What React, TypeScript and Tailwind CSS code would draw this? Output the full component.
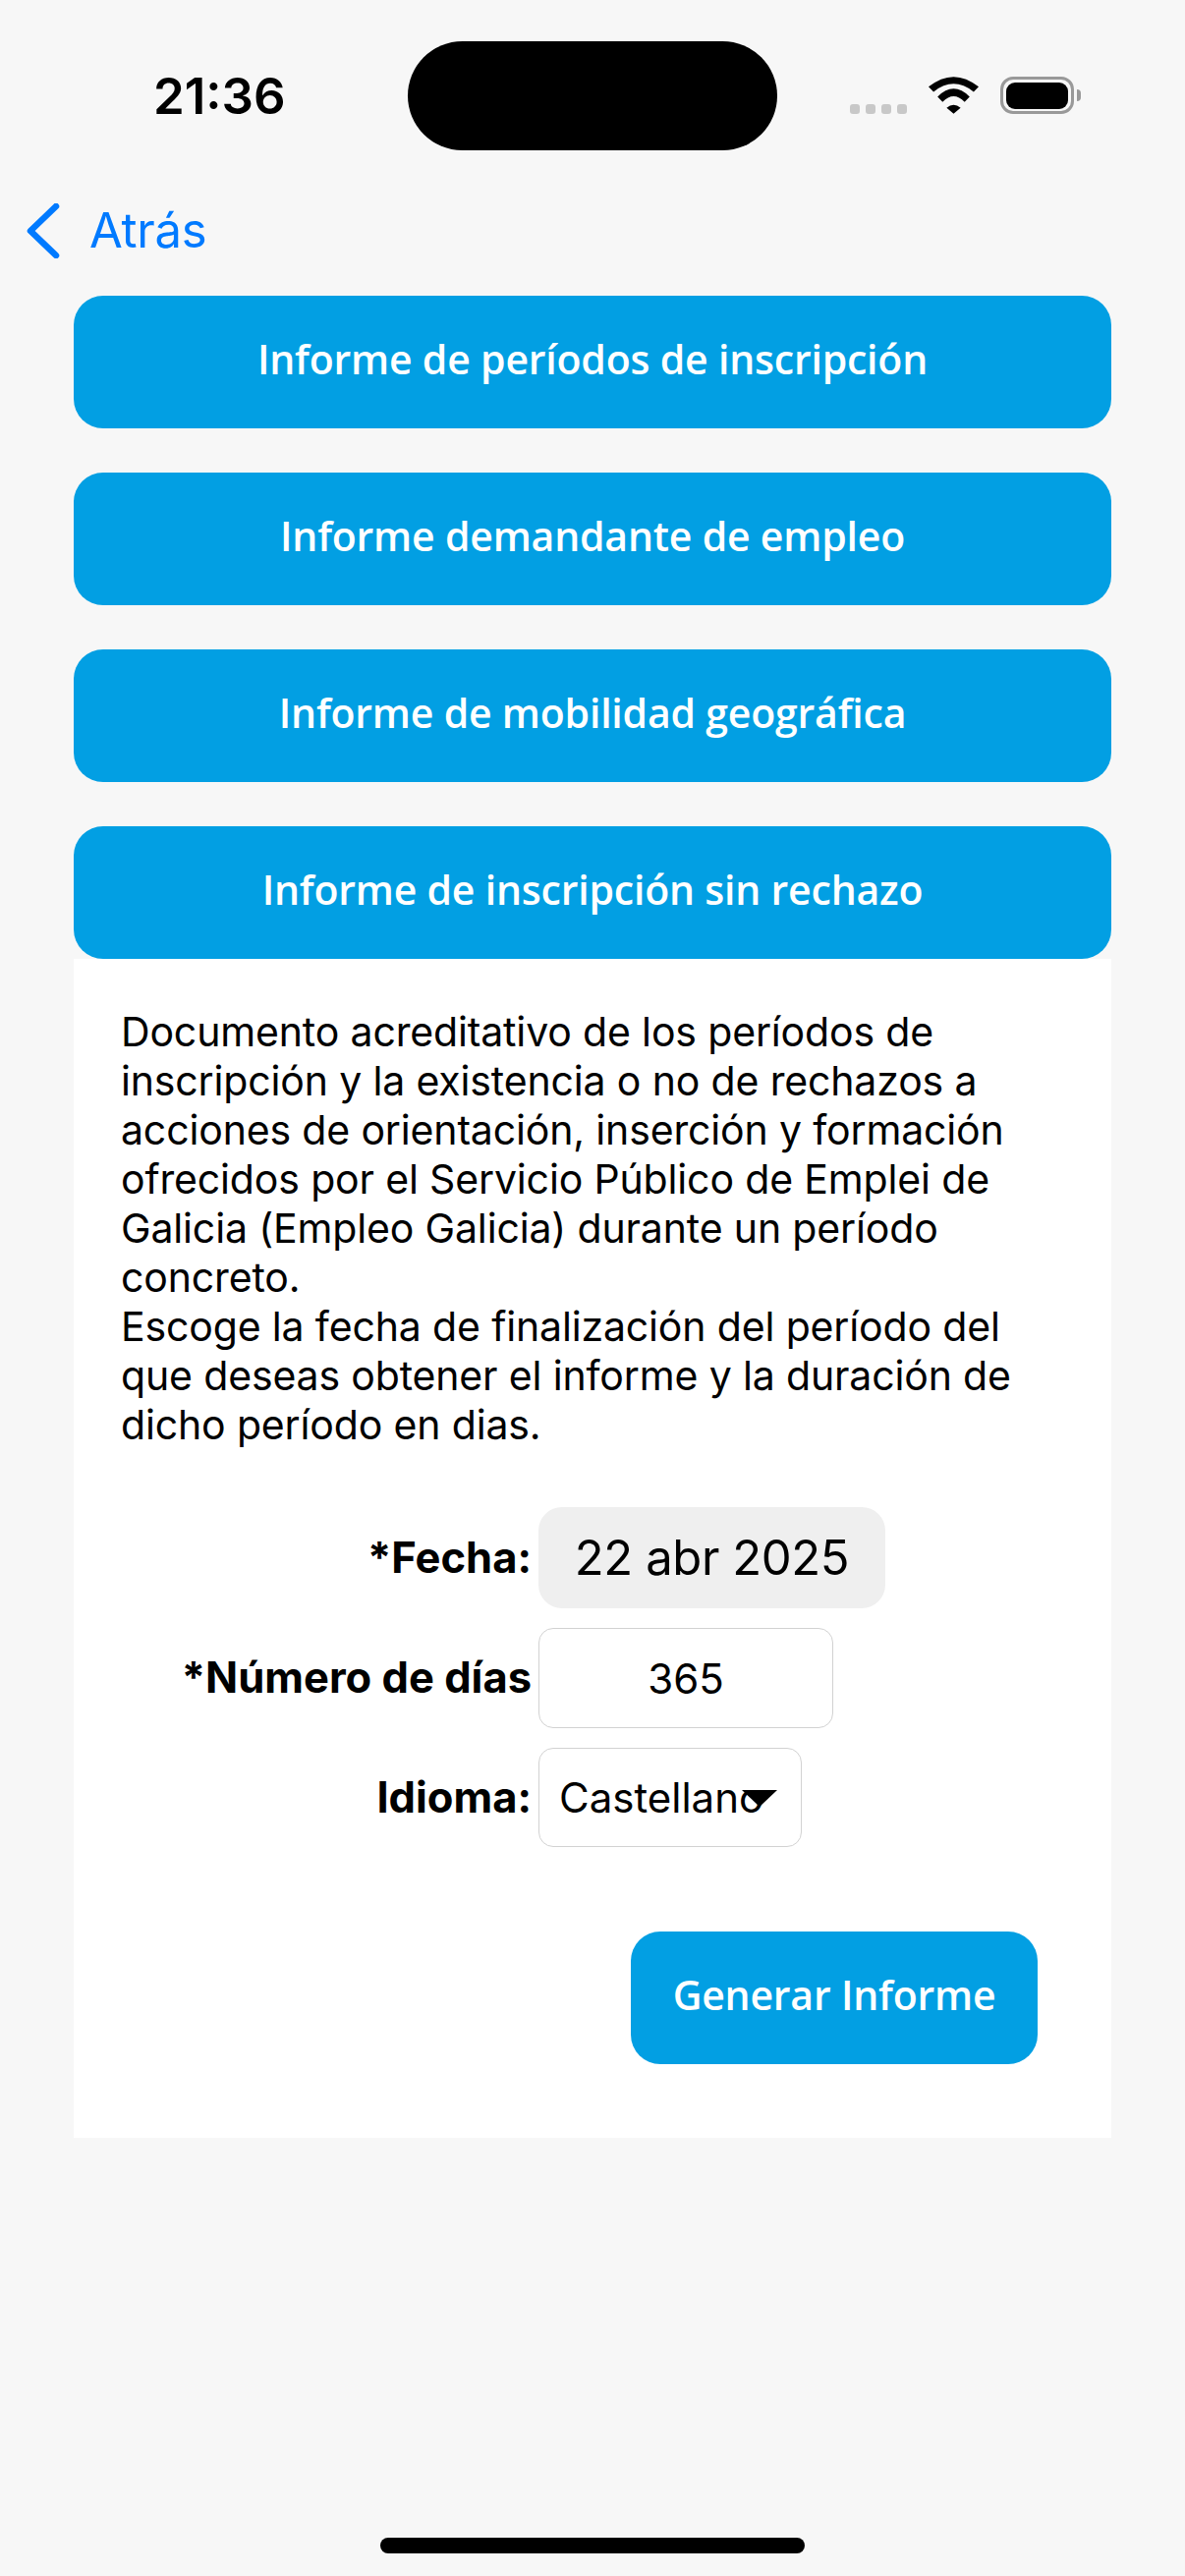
import React from "react";

const reports = [
  "Informe de períodos de inscripción",
  "Informe demandante de empleo",
  "Informe de mobilidad geográfica",
];

const BlueButton: React.FC<{ label: string; className?: string }> = ({ label, className = "" }) => (
  <button
    className={`h-[135px] rounded-[30px] bg-[#029fe3] pb-[6px] text-white text-[41px] tracking-[-0.2px] font-semibold font-['Open_Sans',sans-serif] ${className}`}
  >
    {label}
  </button>
);

const StatusBar: React.FC = () => (
  <div className="relative flex h-[170px] shrink-0 items-start">
    <span className="ml-[156px] mt-[68px] text-[51px] leading-[60px] font-semibold text-black">21:36</span>

    {/* Dynamic island */}
    <div className="absolute left-[415px] top-[42px] h-[111px] w-[376px] rounded-[56px] bg-black" />

    <div className="ml-auto mr-[113px] mt-[78px] flex items-start">
      <div className="mt-[28px] flex gap-[6px]">
        <div className="h-[10px] w-[10px] rounded-[3px] bg-[#c8c8c8]" />
        <div className="h-[10px] w-[10px] rounded-[3px] bg-[#c8c8c8]" />
        <div className="h-[10px] w-[10px] rounded-[3px] bg-[#c8c8c8]" />
        <div className="h-[10px] w-[10px] rounded-[3px] bg-[#c8c8c8]" />
      </div>
      <svg className="ml-[22px]" width="51" height="38" viewBox="0 0 50 37" fill="#000">
        <path d="M0 10 Q25 -10 50 10 L45 15 Q25 -1 5 15 Z" />
        <path d="M9 20 Q25 4 41 20 L36 25 Q25 14 14 25 Z" />
        <path d="M18 31 Q25 25 32 31 L25 37 Z" />
      </svg>
      <div className="relative ml-[22px] flex h-[38px] w-[75px] items-center justify-center rounded-[13px] border-[3px] border-[#999999]">
        <div className="h-[27px] w-[63px] rounded-[9px] bg-black" />
        <div className="absolute -right-[10px] h-[12px] w-[4px] rounded-r-[4px] bg-[#999999]" />
      </div>
    </div>
  </div>
);

const App: React.FC = () => {
  return (
    <div className="relative flex h-[2622px] w-[1206px] flex-col overflow-hidden bg-[#f7f7f7] font-['Inter',sans-serif] text-black">
      <StatusBar />

      {/* Back link */}
      <div className="flex h-[131px] shrink-0 items-start">
        <div className="ml-[27px] mt-[37px] flex items-center">
          <svg width="34" height="56" viewBox="0 0 34 56" fill="none" stroke="#007aff" strokeWidth="6.5" strokeLinecap="round" strokeLinejoin="round">
            <path d="M30 3 L4 28 L30 53" />
          </svg>
          <span className="ml-[30px] text-[49px] leading-[56px] tracking-[-0.3px] text-[#007aff]">Atrás</span>
        </div>
      </div>

      <div className="mx-[75px] flex flex-col gap-[45px]">
        {reports.map((r) => (
          <BlueButton key={r} label={r} className="w-full" />
        ))}

        <div className="flex flex-col">
          <BlueButton label="Informe de inscripción sin rechazo" className="w-full" />

          <div className="flex flex-col bg-white">
            <p className="px-[48px] pt-[49px] text-[41px] leading-[50px] tracking-[-0.15px]">
              Documento acreditativo de los períodos de inscripción y la existencia o no de rechazos a acciones de
              orientación, inserción y formación ofrecidos por el Servicio Público de Emplei de Galicia (Empleo Galicia)
              durante un período concreto.
              <br />
              Escoge la fecha de finalización del período del que deseas obtener el informe y la duración de dicho
              período en dias.
            </p>

            <div className="mt-[59px] flex flex-col gap-[20px]">
              <div className="flex items-center gap-[7px]">
                <label className="w-[466px] text-right text-[43.5px] font-bold">*Fecha:</label>
                <div className="flex h-[103px] w-[353px] items-center justify-center rounded-[24px] bg-[#efefef] text-[49px] tracking-[-0.4px]">
                  22 abr 2025
                </div>
              </div>
              <div className="flex items-center gap-[7px]">
                <label className="w-[466px] text-right text-[43.5px] font-bold">*Número de días</label>
                <input
                  readOnly
                  value="365"
                  className="h-[102px] w-[300px] rounded-[15px] border-[1.5px] border-[#d2d2d2] bg-white text-center text-[42px]"
                />
              </div>
              <div className="flex items-center gap-[7px]">
                <label className="w-[466px] text-right text-[43.5px] font-bold">Idioma:</label>
                <div className="relative flex h-[101px] w-[268px] items-center rounded-[15px] border-[1.5px] border-[#d2d2d2] bg-white pl-[20px] text-[42px]">
                  Castellano
                  <svg className="absolute left-[206px] top-[42px]" width="36" height="17" viewBox="0 0 36 17" fill="#000">
                    <path d="M0 0 H36 L18 17 Z" />
                  </svg>
                </div>
              </div>
            </div>

            <div className="mt-[86px] flex justify-end pb-[75px] pr-[75px]">
              <BlueButton label="Generar Informe" className="w-[414px]" />
            </div>
          </div>
        </div>
      </div>

      {/* Home indicator */}
      <div className="absolute left-[387px] top-[2583px] h-[16px] w-[432px] rounded-full bg-black" />
    </div>
  );
};

export default App;
